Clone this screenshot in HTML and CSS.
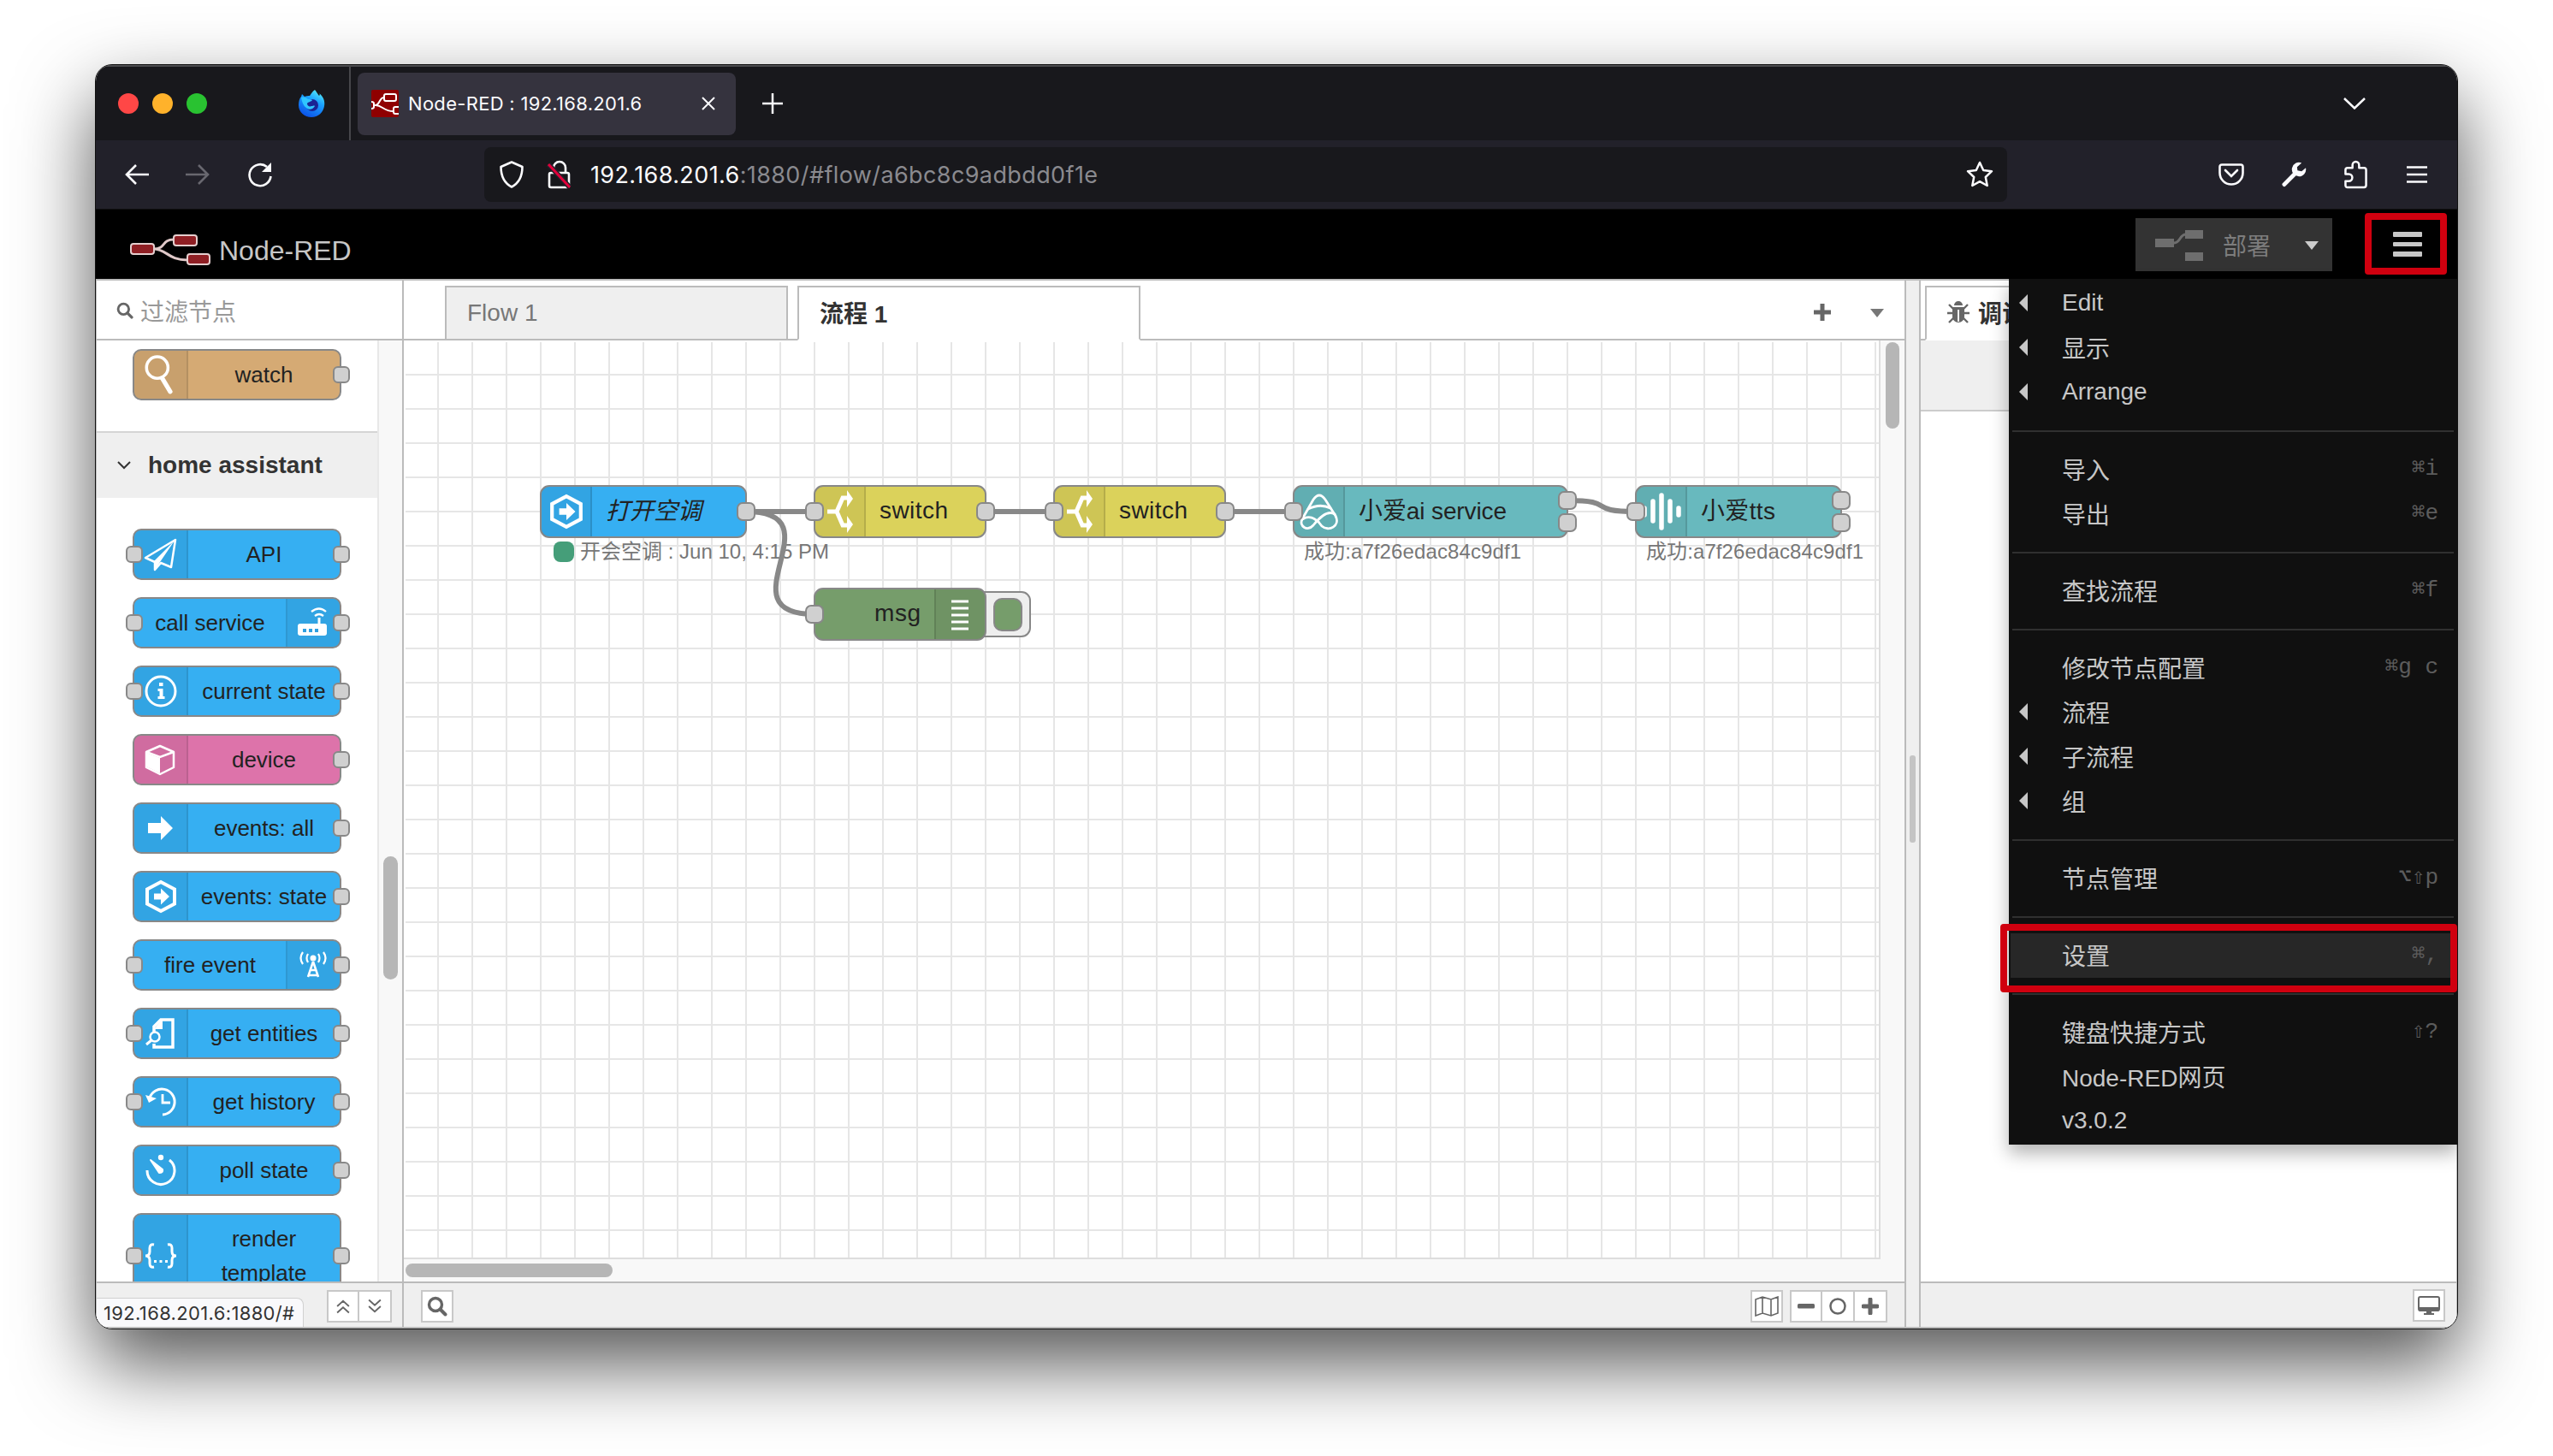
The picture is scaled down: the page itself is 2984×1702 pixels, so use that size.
FILE: index.html
```html
<!DOCTYPE html>
<html lang="zh-CN">
<head>
  <meta charset="UTF-8">
  <title>Node-RED : 192.168.201.6</title>
  <link rel="stylesheet" href="styles.css">
</head>
<body>
  <!-- Shared icons -->
  <svg class="sprite">
    <symbol id="i-hex" viewBox="0 0 40 40"><path d="M20 3 36 11.500V28.500L20 37 4 28.500V11.500Z" fill="none" stroke="#fff" stroke-width="4"/><path d="M12 16.500h8v-6l10 9.500-10 9.500v-6h-8z" fill="#fff"/></symbol>
    <symbol id="i-switch" viewBox="0 0 30 50"><path d="M0 25h11l7-16h6M11 25l7 16h6" fill="none" stroke="#fff" stroke-width="5"/><path d="M23 0l7 10-7 10zM23 30l7 10-7 10z" fill="#fff"/></symbol>
    <symbol id="i-search" viewBox="0 0 24 24"><circle cx="10" cy="10" r="7.500" fill="none" stroke="currentColor" stroke-width="3.400"/><path d="M15.500 15.500l6 6" stroke="currentColor" stroke-width="4" stroke-linecap="round"/></symbol>
    <symbol id="i-down" viewBox="0 0 16 10"><path d="M0 0h16L8 10z" fill="currentColor"/></symbol>
  </svg>

  <div class="window">
    <div class="titlebar">
      <div class="lights"><i class="red"></i><i class="yellow"></i><i class="green"></i></div>
      <svg class="firefox" viewBox="0 0 32 32">
        <defs>
          <linearGradient id="fx" x1=".8" y1="0" x2=".3" y2="1"><stop offset="0" stop-color="#5af0f5"/><stop offset=".4" stop-color="#1aa0ff"/><stop offset="1" stop-color="#0b50e8"/></linearGradient>
        </defs>
        <path d="M20 0c2 2 3 5 5 7 1-1 1-2 0-3 5 4 7 9 6 15-1 7-7 13-15 13S1 26 1 18c0-4 1-8 3-10l1-3c1 1 2 2 3 3 2-1 4-1 6-1 2-3 3-5 6-7z" fill="url(#fx)"/>
        <circle cx="17" cy="18" r="7" fill="#1b2493"/>
        <path d="M4 9c3-1 6 0 8 2 2 0 4 0 5 1-1 2-5 2-6 4 0 3 3 4 5 3 2 0 3-1 4 0-2 4-7 5-10 2-3-2-5-6-6-12z" fill="#30c6ff"/>
      </svg>
      <div class="tab-divider"></div>
      <div class="browser-tab">
        <svg class="favicon" viewBox="0 0 32 32"><rect width="32" height="32" rx="2" fill="#8f0000"/><g fill="none" stroke="#fff" stroke-width="2"><rect x="15" y="5" width="14" height="8" rx="2"/><path d="M3 18h2c5 0 4-9 10-9M5 18c8 0 9 7 21 7M32 20h-4q-2 0-2 2v4q0 2 2 2h4M0 14q3 0 3 2v4q0 2-3 2"/></g></svg>
        <span class="browser-tab-title">Node-RED : 192.168.201.6</span>
        <svg class="tab-close" viewBox="0 0 16 16"><path d="M1 1l14 14M15 1L1 15" stroke="#fbfbfe" stroke-width="2"/></svg>
      </div>
      <svg class="tab-new" viewBox="0 0 24 24"><path d="M12 0v24M0 12h24" stroke="#fbfbfe" stroke-width="2.500"/></svg>
      <svg class="tab-list" viewBox="0 0 26 14"><path d="M1 1l12 11.500L25 1" fill="none" stroke="#fbfbfe" stroke-width="2.500"/></svg>
    </div>

    <div class="toolbar">
      <svg class="nav-back" viewBox="0 0 28 24"><path d="M13 1L2 12l11 11M2 12h26" fill="none" stroke="#fbfbfe" stroke-width="2.600"/></svg>
      <svg class="nav-forward" viewBox="0 0 28 24"><path d="M15 1l11 11-11 11M26 12H0" fill="none" stroke="#68676f" stroke-width="2.600"/></svg>
      <svg class="nav-reload" viewBox="0 0 30 30"><path d="M23 6A12.500 12.500 0 1 0 27.500 17" fill="none" stroke="#fbfbfe" stroke-width="2.600"/><path d="M28 1v11H17z" fill="#fbfbfe"/></svg>
      <div class="urlbar">
        <svg class="shield" viewBox="0 0 28 32"><path d="M14 1.500L26.500 7c0 10-3 18.500-12.500 23.500C4.500 25.500 1.500 17 1.500 7z" fill="none" stroke="#fbfbfe" stroke-width="2.600" stroke-linejoin="round"/></svg>
        <svg class="lock" viewBox="0 0 30 34"><path d="M8 15V9a7 7 0 0 1 14 0v6M5 15h19q2 0 2 2v13q0 2-2 2H5q-2 0-2-2V17q0-2 2-2z" fill="none" stroke="#fbfbfe" stroke-width="2.600"/><path d="M2 5l25 27" stroke="#22212a" stroke-width="6"/><path d="M2 5l25 27" stroke="#e2003b" stroke-width="3"/></svg>
        <span class="url"><b>192.168.201.6</b>:1880/#flow/a6bc8c9adbdd0f1e</span>
        <svg class="star" viewBox="0 0 32 32"><path d="M16 2l4.200 9 9.800 1.200-7.200 6.800 1.900 10L16 24.200 7.300 29l1.900-10L2 12.200 11.800 11z" fill="none" stroke="#fbfbfe" stroke-width="2.500" stroke-linejoin="round"/></svg>
      </div>
      <div class="tools">
        <svg class="pocket" viewBox="0 0 30 26"><path d="M4 1.500h22q2.500 0 2.500 2.500v7a13.500 13.500 0 0 1-27 0V4Q1.500 1.500 4 1.500z" fill="none" stroke="#fbfbfe" stroke-width="2.600"/><path d="M8 8l7 7 7-7" fill="none" stroke="#fbfbfe" stroke-width="2.600" stroke-linecap="round"/></svg>
        <svg class="wrench" viewBox="0 0 30 30"><path d="M3 27L17 13" stroke="#fbfbfe" stroke-width="5" stroke-linecap="round"/><path d="M24 1a8.500 8.500 0 1 0 5 6l-5 4-5-1-.5-4z" fill="#fbfbfe"/></svg>
        <svg class="puzzle" viewBox="0 0 28 34"><path d="M10 9V5.500a4 4 0 0 1 8 0V9h6q2.500 0 2.500 2.500V30q0 2.500-2.500 2.500H4q-2.500 0-2.500-2.500v-5h4a4 4 0 0 0 0-8.500h-4v-5Q1.500 9 4 9z" fill="none" stroke="#fbfbfe" stroke-width="2.600" stroke-linejoin="round"/></svg>
        <svg class="burger" viewBox="0 0 24 20"><path d="M0 1.500h24M0 10h24M0 18.500h24" stroke="#fbfbfe" stroke-width="2.400"/></svg>
      </div>
    </div>

    <div class="header">
      <svg class="logo" viewBox="0 0 94 37"><path d="M27 17c16 0 9-11 24-11M27 17c16 0 17 13 40 13" fill="none" stroke="#e0c9c9" stroke-width="3"/><g fill="#8f1f24" stroke="#e5cfcf" stroke-width="2"><rect x="1" y="11" width="27" height="12" rx="3"/><rect x="51" y="1" width="27" height="12" rx="3"/><rect x="67" y="23" width="26" height="12" rx="3"/></g></svg>
      <span class="brand">Node-RED</span>
      <div class="deploy">
        <svg class="deploy-icon" viewBox="0 0 56 38"><path d="M22 15c8 0 6-10 14-10" fill="none" stroke="#6e6e6e" stroke-width="3"/><path d="M0 10h22v10H0zM35 0h21v10H35zM35 26h21v10H35z" fill="#6e6e6e"/></svg>
        <span>部署</span>
        <svg class="caret"><use href="#i-down"/></svg>
      </div>
      <div class="menu-button"><i></i><i></i><i></i></div>
    </div>

    <div class="editor">
      <div class="palette">
        <div class="palette-search"><svg><use href="#i-search"/></svg>过滤节点</div>
        <div class="palette-body">
          <div class="palette-scroll">
            <div class="category first">
              <div class="pnode watch"><div class="icon"><svg viewBox="0 0 40 44"><circle cx="16" cy="14" r="12" fill="none" stroke="#fff" stroke-width="3.400"/><path d="M21.500 26l9 15" stroke="#fff" stroke-width="5" stroke-linecap="round"/></svg></div><span>watch</span><i class="port out"></i></div>
            </div>
            <div class="category-title"><svg viewBox="0 0 16 10"><path d="M1 1l7 7 7-7" fill="none" stroke="#333" stroke-width="2"/></svg>home assistant</div>
            <div class="category">
              <div class="pnode"><i class="port in"></i><div class="icon"><svg viewBox="0 0 40 40"><path d="M2 24L37 3l-5 32-12-5-7 8v-9z" fill="none" stroke="#fff" stroke-width="2.500" stroke-linejoin="round"/><path d="M12 28L36 4 19 29l-6 9z" fill="#fff"/></svg></div><span>API</span><i class="port out"></i></div>
              <div class="pnode right"><i class="port in"></i><span>call service</span><div class="icon"><svg viewBox="0 0 40 40"><path d="M26 14v9" stroke="#fff" stroke-width="3"/><path d="M22 13q5-4 10 0M18 8q9-7 17 0" transform="translate(-1 -1)" fill="none" stroke="#fff" stroke-width="2.300"/><path d="M6 21h26q3 0 3 3v8q0 3-3 3H4q-3 0-3-3v-8q0-3 3-3z" fill="#fff"/><path d="M7 27h4v4H7zM14 27h4v4h-4zM21 27h4v4h-4z" fill="#2f9fe0"/></svg></div><i class="port out"></i></div>
              <div class="pnode"><i class="port in"></i><div class="icon"><svg viewBox="0 0 40 40"><circle cx="20" cy="20" r="17" fill="none" stroke="#fff" stroke-width="3"/><path d="M18 10h4.500v4H18zM16.500 17h6v9h2v3h-8v-3h2v-6h-2z" fill="#fff"/></svg></div><span>current state</span><i class="port out"></i></div>
              <div class="pnode device"><div class="icon"><svg viewBox="0 0 40 40"><path d="M19 4l16 7v18l-16 8-16-8V11z" fill="none" stroke="#fff" stroke-width="2.500" stroke-linejoin="round"/><path d="M3 11l16 6 16-6" fill="none" stroke="#fff" stroke-width="2.500"/><path d="M3 12l16 6v18L3 28z" fill="#fff"/></svg></div><span>device</span><i class="port out"></i></div>
              <div class="pnode"><div class="icon"><svg viewBox="0 0 40 40"><path d="M5 14h15V6l14 14-14 14v-8H5z" fill="#fff"/></svg></div><span>events: all</span><i class="port out"></i></div>
              <div class="pnode"><div class="icon"><svg><use href="#i-hex"/></svg></div><span>events: state</span><i class="port out"></i></div>
              <div class="pnode right"><i class="port in"></i><span>fire event</span><div class="icon"><svg viewBox="0 0 40 40"><circle cx="19" cy="12" r="3.500" fill="#fff"/><path d="M19 16l-6 18M19 16l6 18M15.500 26h7M13 32h12" fill="none" stroke="#fff" stroke-width="2.500"/><path d="M13 7q-3 5 0 10M25 7q3 5 0 10M7 5q-5 7 0 14M31 5q5 7 0 14" fill="none" stroke="#fff" stroke-width="2.200"/></svg></div><i class="port out"></i></div>
              <div class="pnode"><i class="port in"></i><div class="icon"><svg viewBox="0 0 40 40"><path d="M12 19V12L20 4h14v32H12v-4" fill="none" stroke="#fff" stroke-width="3.500"/><path d="M12 15L22 3v12z" fill="#fff"/><circle cx="13" cy="24" r="5.500" fill="none" stroke="#fff" stroke-width="2.500"/><path d="M9 28l-6 5" stroke="#fff" stroke-width="3"/></svg></div><span>get entities</span><i class="port out"></i></div>
              <div class="pnode"><i class="port in"></i><div class="icon"><svg viewBox="0 0 40 40"><path d="M7 15a15 15 0 1 1 15 20" fill="none" stroke="#fff" stroke-width="3"/><path d="M2 12l4 9 9-5z" fill="#fff"/><path d="M22 11v10h9" fill="none" stroke="#fff" stroke-width="2.800"/></svg></div><span>get history</span><i class="port out"></i></div>
              <div class="pnode"><div class="icon"><svg viewBox="0 0 40 40"><path d="M4 20a16 16 0 1 0 26-12" fill="none" stroke="#fff" stroke-width="3"/><path d="M8 8l14 11q1 4-4 4z" fill="#fff" stroke="#fff" stroke-width="2" stroke-linejoin="round"/><circle cx="20" cy="5" r="3.200" fill="#fff"/></svg></div><span>poll state</span><i class="port out"></i></div>
              <div class="pnode tall"><i class="port in"></i><div class="icon"><svg viewBox="0 0 40 40"><path d="M12 7q-5-1-5 4v4q0 5-5 5 5 0 5 5v4q0 5 5 4M28 7q5-1 5 4v4q0 5 5 5-5 0-5 5v4q0 5-5 4" fill="none" stroke="#fff" stroke-width="3"/><path d="M12 25h3v3h-3zM18.500 25h3v3h-3zM25 25h3v3h-3z" fill="#fff"/></svg></div><span>render<br>template</span><i class="port out"></i></div>
            </div>
          </div>
          <div class="palette-track"><i></i></div>
        </div>
        <div class="footer palette-footer">
          <div class="status-url">192.168.201.6:1880/#</div>
          <div class="button-group">
            <div class="fbutton"><svg viewBox="0 0 16 16"><path d="M2.500 8L8 3l5.500 5M2.500 14L8 9l5.500 5" fill="none" stroke="#666" stroke-width="1.500"/></svg></div>
            <div class="fbutton"><svg viewBox="0 0 16 16"><path d="M2.500 2L8 7l5.500-5M2.500 8L8 13l5.500-5" fill="none" stroke="#666" stroke-width="1.500"/></svg></div>
          </div>
        </div>
      </div>

      <div class="workspace">
        <div class="tabs">
          <div class="tab">Flow 1</div>
          <div class="tab active">流程 1</div>
          <svg class="tab-add" viewBox="0 0 22 22"><path d="M11 1v20M1 11h20" stroke="#666" stroke-width="5"/></svg>
          <svg class="tab-menu"><use href="#i-down"/></svg>
        </div>
        <div class="chart">
          <!-- Canvas origin is the top left corner of the grid -->
          <svg class="canvas" viewBox="472 398 1726 1074">
            <defs>
              <pattern id="grid" x="512" y="438" width="40" height="40" patternUnits="userSpaceOnUse"><path d="M0 0h40M0 0v40M40 0v40M0 40h40" stroke="#e6e6e6" stroke-width="2"/></pattern>
            </defs>
            <rect x="474" y="400" width="1723" height="1070" fill="url(#grid)"/>
            <path d="M2197 398v1073H472" fill="none" stroke="#ddd" stroke-width="2"/>

            <g class="status">
              <rect x="647" y="633" width="24" height="24" rx="8" fill="#459e79"/>
              <text x="678" y="653" textLength="291">开会空调 : Jun 10, 4:15 PM</text>
              <text x="1524" y="653" textLength="254">成功:a7f26edac84c9df1</text>
              <text x="1924" y="653" textLength="254">成功:a7f26edac84c9df1</text>
            </g>

            <g class="links">
              <path d="M872 598H952M1152 598h80M1432 598h80"/>
              <path d="M872 598C982 598 842 718 952 718"/>
              <path d="M1832 585C1892 585 1852 598 1912 598"/>
            </g>

            <g class="node">
              <rect class="box" x="632" y="568" width="240" height="60" rx="10" fill="#36aff2"/>
              <path class="shade" d="M692 569v58H642q-9 0-9-9V578q0-9 9-9z"/><path class="edge" d="M691 569v58"/>
              <use href="#i-hex" x="641" y="577" width="42" height="42"/>
              <text class="italic" x="708" y="607">打开空调</text>
              <rect class="port" x="862" y="588" width="20" height="20" rx="6"/>
            </g>
            <g class="node">
              <rect class="box" x="952" y="568" width="200" height="60" rx="10" fill="#dbd25b"/>
              <path class="shade" d="M1012 569v58H962q-9 0-9-9V578q0-9 9-9z"/><path class="edge" d="M1011 569v58"/>
              <use href="#i-switch" x="967" y="573" width="30" height="50"/>
              <text x="1028" y="606" textLength="80">switch</text>
              <rect class="port" x="942" y="588" width="20" height="20" rx="6"/>
              <rect class="port" x="1142" y="588" width="20" height="20" rx="6"/>
            </g>
            <g class="node">
              <rect class="box" x="1232" y="568" width="200" height="60" rx="10" fill="#dbd25b"/>
              <path class="shade" d="M1292 569v58h-50q-9 0-9-9V578q0-9 9-9z"/><path class="edge" d="M1291 569v58"/>
              <use href="#i-switch" x="1247" y="573" width="30" height="50"/>
              <text x="1308" y="606" textLength="80">switch</text>
              <rect class="port" x="1222" y="588" width="20" height="20" rx="6"/>
              <rect class="port" x="1422" y="588" width="20" height="20" rx="6"/>
            </g>
            <g class="node">
              <rect class="box" x="1512" y="568" width="320" height="60" rx="10" fill="#68b9be"/>
              <path class="shade" d="M1572 569v58h-50q-9 0-9-9V578q0-9 9-9z"/><path class="edge" d="M1571 569v58"/>
              <g fill="none" stroke="#fff" stroke-width="2.800" stroke-linecap="round"><path d="M1522 607L1535 584Q1542 574 1549 584L1561 603C1567 615 1553 622 1545 615L1541 610"/><path d="M1529 595Q1543 588 1555 594"/><path d="M1522 607C1518 615 1528 622 1535 614C1543 604 1552 596 1560 601"/><path d="M1522 607C1531 602 1536 606 1541 610"/></g>
              <text x="1588" y="607" textLength="173">小爱ai service</text>
              <rect class="port" x="1502" y="588" width="20" height="20" rx="6"/>
              <rect class="port" x="1822" y="575" width="20" height="20" rx="6"/>
              <rect class="port" x="1822" y="601" width="20" height="20" rx="6"/>
            </g>
            <g class="node">
              <rect class="box" x="1912" y="568" width="240" height="60" rx="10" fill="#68b9be"/>
              <path class="shade" d="M1972 569v58h-50q-9 0-9-9V578q0-9 9-9z"/><path class="edge" d="M1971 569v58"/>
              <path d="M1922 594v8M1932 586v23M1942 579v38M1952 586v23M1962 594v8" stroke="#fff" stroke-width="5.500" stroke-linecap="round"/>
              <text x="1988" y="607" textLength="87">小爱tts</text>
              <rect class="port" x="1902" y="588" width="20" height="20" rx="6"/>
              <rect class="port" x="2142" y="575" width="20" height="20" rx="6"/>
              <rect class="port" x="2142" y="601" width="20" height="20" rx="6"/>
            </g>
            <g class="node">
              <rect x="1130" y="692" width="74" height="52" rx="10" fill="#eee" stroke="#888" stroke-width="2"/>
              <rect x="1162" y="700" width="32" height="37" rx="9" fill="#769d6b" stroke="#888" stroke-width="2"/>
              <rect class="box" x="952" y="688" width="200" height="60" rx="10" fill="#769d6b"/>
              <path class="shade" d="M1092 689v58h50q9 0 9-9V698q0-9-9-9z"/><path class="edge" d="M1093 689v58"/>
              <path d="M1112 703h20M1112 711h20M1112 719h20M1112 727h20M1112 735h20" stroke="#fff" stroke-width="3"/>
              <text x="1022" y="726" textLength="54">msg</text>
              <rect class="port" x="942" y="708" width="20" height="20" rx="6"/>
            </g>
          </svg>
          <div class="v-track"><i></i></div>
          <div class="h-track"><i></i></div>
        </div>
        <div class="footer workspace-footer">
          <div class="fbutton"><svg class="big"><use href="#i-search"/></svg></div>
          <div class="fbutton map"><svg class="map-icon" viewBox="0 0 28 24"><path d="M1 4l8-3 10 3 8-3v19l-8 3-10-3-8 3zM9 1v19M19 4v19" fill="none" stroke="#666" stroke-width="1.600"/></svg></div>
          <div class="button-group">
            <div class="fbutton"><svg viewBox="0 0 20 20"><rect y="7" width="20" height="5.500" rx="1.500" fill="#666"/></svg></div>
            <div class="fbutton"><svg viewBox="0 0 20 20"><circle cx="10" cy="10" r="8.500" fill="none" stroke="#666" stroke-width="2.500"/></svg></div>
            <div class="fbutton"><svg viewBox="0 0 20 20"><path d="M10 2v16M2 10h16" stroke="#666" stroke-width="5" stroke-linecap="round"/></svg></div>
          </div>
        </div>
      </div>

      <div class="separator"><i></i></div>

      <div class="sidebar">
        <div class="tabs sidebar-tabs">
          <div class="tab active"><svg viewBox="0 0 26 26"><path d="M8 5a5 5 0 0 1 10 0zM6 7h14v11a7 7 0 0 1-14 0z" fill="#666"/><path d="M0 14h26M2 4l5 5M24 4l-5 5M2 25l6-6M24 25l-6-6" stroke="#666" stroke-width="2.400"/><path d="M13 10v14" stroke="#fff" stroke-width="1.800"/></svg>调试</div>
        </div>
        <div class="sidebar-toolbar"></div>
        <div class="sidebar-content"></div>
        <div class="footer sidebar-footer"><div class="fbutton"><svg class="monitor" viewBox="0 0 26 22"><rect x="1" y="1" width="24" height="16" rx="2" fill="#fff" stroke="#666" stroke-width="2"/><path d="M1 13h24v3q0 2-2 2H3q-2 0-2-2zM10 18h6v2h3v2H7v-2h3z" fill="#666"/></svg></div></div>
      </div>
    </div>

    <div class="menu">
      <div class="item sub">Edit</div>
      <div class="item sub">显示</div>
      <div class="item sub">Arrange</div>
      <hr>
      <div class="item">导入<kbd><i>⌘</i><i>i</i></kbd></div>
      <div class="item">导出<kbd><i>⌘</i><i>e</i></kbd></div>
      <hr>
      <div class="item">查找流程<kbd><i>⌘</i><i>f</i></kbd></div>
      <hr>
      <div class="item">修改节点配置<kbd><i>⌘</i><i>g</i><i></i><i>c</i></kbd></div>
      <div class="item sub">流程</div>
      <div class="item sub">子流程</div>
      <div class="item sub">组</div>
      <hr>
      <div class="item">节点管理<kbd><i>⌥</i><i>⇧</i><i>p</i></kbd></div>
      <hr>
      <div class="item hover">设置<kbd><i>⌘</i><i>,</i></kbd></div>
      <hr>
      <div class="item">键盘快捷方式<kbd><i>⇧</i><i>?</i></kbd></div>
      <div class="item">Node-RED网页</div>
      <div class="item">v3.0.2</div>
    </div>
  </div>

  <div class="mark mark-menu"></div>
  <div class="mark mark-settings"></div>
</body>
</html>
```
FILE: styles.css
```css
* {
  box-sizing: border-box;
}
body {
  margin: 0;
  padding: 75px 0 0 111px;
  width: 2984px;
  height: 1702px;
  overflow: hidden;
  background: #fff;
  font-family: "Liberation Sans", "Noto Sans CJK SC", sans-serif;
  font-size: 28px;
  color: #333;
}
svg {
  display: block;
  flex: none;
}
.sprite {
  position: absolute;
  width: 0;
  height: 0;
}
.window {
  position: relative;
  display: flex;
  flex-direction: column;
  width: 2762px;
  height: 1479px;
  border: 1px solid #111;
  border-radius: 20px;
  background: #fff;
  box-shadow: 0 40px 90px rgba(0, 0, 0, .67);
  overflow: hidden;
}

/* Browser chrome */
.titlebar {
  display: flex;
  align-items: center;
  height: 88px;
  padding-left: 26px;
  background: #18181c;
  border-top: 2px solid #4b4b4e;
  font-family: Inter, sans-serif;
}
.lights {
  display: flex;
  gap: 16px;
}
.lights i {
  width: 24px;
  height: 24px;
  border-radius: 50%;
}
.lights .red { background: #ff4746; }
.lights .yellow { background: #ffb22b; }
.lights .green { background: #29c231; }
.firefox {
  width: 32px;
  height: 32px;
  margin-left: 106px;
}
.tab-divider {
  width: 2px;
  height: 88px;
  margin-left: 28px;
  background: #47474b;
}
.browser-tab {
  display: flex;
  align-items: center;
  width: 442px;
  height: 73px;
  margin-left: 8px;
  padding: 0 24px 0 16px;
  border-radius: 8px;
  background: #35333e;
  color: #fbfbfe;
}
.favicon {
  width: 32px;
  height: 32px;
}
.browser-tab-title {
  flex: 1;
  margin-left: 11px;
  font-size: 22px;
  letter-spacing: .3px;
  white-space: nowrap;
}
.tab-close { width: 16px; height: 16px; }
.tab-new { width: 24px; height: 24px; margin-left: 31px; }
.tab-list { width: 26px; height: 14px; margin: 0 107px 0 auto; }
.toolbar {
  display: flex;
  align-items: center;
  height: 81px;
  padding: 0 35px 0 34px;
  background: #22212a;
  border-bottom: 1px solid #111;
}
.nav-back, .nav-forward { width: 28px; height: 24px; }
.nav-forward { margin-left: 43px; }
.nav-reload { width: 30px; height: 30px; margin-left: 44px; }
.urlbar {
  display: flex;
  align-items: center;
  width: 1780px;
  height: 64px;
  margin-left: 247px;
  padding: 0 16px 0 18px;
  border-radius: 8px;
  background: #18181c;
}
.shield { width: 28px; height: 32px; }
.lock { width: 30px; height: 34px; margin-left: 27px; }
.url {
  flex: 1;
  margin-left: 21px;
  font-family: Inter, sans-serif;
  font-size: 27px;
  letter-spacing: .39px;
  color: #8a8a8f;
}
.url b {
  font-weight: 400;
  color: #fbfbfe;
}
.star { width: 32px; height: 32px; }
.tools {
  display: flex;
  flex: 1;
  align-items: center;
  justify-content: flex-end;
  gap: 44px;
}
.pocket { width: 30px; height: 26px; }
.wrench { width: 29px; height: 30px; }
.puzzle { width: 27px; height: 34px; }
.burger { width: 24px; height: 20px; margin-left: 2px; }

/* Editor header */
.header {
  display: flex;
  align-items: center;
  height: 81px;
  padding: 0 41px 0 40px;
  background: #000;
}
.logo {
  width: 94px;
  height: 37px;
  margin-top: 14px;
}
.brand {
  flex: 1;
  margin: 15px 0 0 10px;
  font-size: 32px;
  color: #c7c7c7;
}
.deploy {
  display: flex;
  align-items: center;
  width: 230px;
  height: 62px;
  padding: 0 16px 0 23px;
  background: #333;
  color: #7d7d7d;
}
.deploy-icon { width: 56px; height: 38px; margin: 4px 23px 0 0; }
.deploy .caret { width: 16px; height: 10px; margin: 2px 0 0 auto; color: #ccc; }
.menu-button {
  display: flex;
  flex-direction: column;
  gap: 6px;
  margin-left: 71px;
}
.menu-button i {
  width: 34px;
  height: 5.500px;
  border-radius: 1px;
  background: #c7c7c7;
}

/* Editor layout */
.editor {
  display: flex;
  flex: 1;
  min-height: 0;
  border: solid #bbb;
  border-width: 2px 1px;
}
.palette {
  display: flex;
  flex-direction: column;
  width: 359px;
  border-right: 2px solid #bbb;
}
.palette-search {
  display: flex;
  align-items: center;
  height: 70px;
  padding: 1px 0 0 23px;
  border-bottom: 2px solid #bbb;
  color: #999;
}
.palette-search svg {
  width: 20px;
  height: 20px;
  margin-right: 8px;
  color: #666;
}
.palette-body {
  display: flex;
  flex: 1;
  min-height: 0;
}
.palette-scroll {
  width: 328px;
  overflow: hidden;
}
.palette-track {
  flex: 1;
  padding: 603px 0 0 5px;
  background: #f8f8f8;
  border-left: 2px solid #e8e8e8;
}
.palette-track i {
  display: block;
  width: 17px;
  height: 144px;
  border-radius: 9px;
  background: #b6b6b6;
}
.category {
  display: flex;
  flex-direction: column;
  gap: 20px;
  padding: 36px 0 36px 42px;
}
.category.first {
  padding-top: 10px;
}
.category-title {
  display: flex;
  align-items: center;
  height: 78px;
  padding-left: 24px;
  background: #efefef;
  border-top: 2px solid #d5d5d5;
  font-weight: bold;
}
.category-title svg {
  width: 16px;
  height: 10px;
  margin-right: 20px;
}
.pnode {
  position: relative;
  display: flex;
  flex: none;
  width: 244px;
  height: 60px;
  border: 2px solid #888;
  border-radius: 10px;
  background: #36aff2;
  color: #222;
  font-size: 26px;
  line-height: 40px;
}
.pnode.watch { background: #d5aa74; }
.pnode.device { background: #dd73aa; }
.pnode.tall { height: 100px; }
.pnode span {
  flex: 1;
  align-self: center;
  text-align: center;
  white-space: nowrap;
}
.pnode .icon {
  display: flex;
  align-items: center;
  justify-content: center;
  width: 63px;
  border-right: 2px solid rgba(0, 0, 0, .1);
  border-radius: 8px 0 0 8px;
  background: rgba(0, 0, 0, .06);
}
.pnode.right .icon {
  border-left: 2px solid rgba(0, 0, 0, .08);
  border-right: 0;
  border-radius: 0 8px 8px 0;
}
.pnode .icon svg {
  width: 40px;
  height: 40px;
}
.pnode.watch .icon svg {
  width: 44px;
  height: 46px;
}
.pnode .port {
  position: absolute;
  top: 50%;
  z-index: 1;
  width: 20px;
  height: 20px;
  margin-top: -10px;
  border: 2px solid #888;
  border-radius: 6px;
  background: #d0d0d0;
}
.port.in { left: -10px; }
.port.out { right: -12px; }

/* Workspace */
.workspace {
  display: flex;
  flex-direction: column;
  width: 1756px;
  border-right: 2px solid #bbb;
}
.tabs {
  display: flex;
  align-items: flex-end;
  height: 70px;
  padding-left: 48px;
  background: linear-gradient(#bbb, #bbb) bottom / 100% 2px no-repeat;
}
.tab {
  display: flex;
  align-items: center;
  width: 401px;
  height: 64px;
  margin-right: 11px;
  padding-left: 24px;
  border: 2px solid #bbb;
  background: #efefef;
  color: #777;
}
.tab.active {
  padding-bottom: 2px;
  border-bottom-color: #fff;
  background: #fff;
  color: #333;
  font-weight: bold;
}
.tab-add { width: 22px; height: 22px; margin: 0 45px 22px auto; }
.tab-menu { width: 16px; height: 10px; margin: 0 24px 27px 0; color: #777; }
.chart {
  display: grid;
  flex: 1;
  grid-template-columns: 1726px 1fr;
  grid-template-rows: 1074px 1fr;
  min-height: 0;
  background: #f8f8f8;
}
.canvas {
  width: 1726px;
  height: 1074px;
  background: #fff;
  font-size: 28px;
}
.canvas text { fill: #222; }
.canvas .status text {
  fill: #777;
  font-size: 24px;
}
.canvas .italic { font-style: italic; }
.links path {
  fill: none;
  stroke: #888;
  stroke-width: 6;
}
.node .box { stroke: #888; stroke-width: 2; }
.node .port { fill: #d0d0d0; stroke: #888; stroke-width: 2; }
.node .shade { fill: #000; fill-opacity: .06; }
.node .edge { stroke: #000; stroke-opacity: .12; stroke-width: 2; }
.v-track { padding: 2px 0 0 6px; }
.v-track i {
  display: block;
  width: 16px;
  height: 101px;
  border-radius: 8px;
  background: #b6b6b6;
}
.h-track {
  grid-column: 1 / 3;
  padding: 5px 0 0 2px;
}
.h-track i {
  display: block;
  width: 242px;
  height: 16px;
  border-radius: 8px;
  background: #b6b6b6;
}
.separator {
  display: flex;
  align-items: center;
  justify-content: center;
  width: 15px;
  background: #efefef;
}
.separator i {
  width: 7px;
  height: 102px;
  margin-bottom: 11px;
  border-radius: 3px;
  background: #c4c4c4;
}

/* Footers */
.footer {
  display: flex;
  align-items: center;
  height: 53px;
  padding-top: 2px;
  border-top: 2px solid #bbb;
  background: #efefef;
}
.fbutton {
  display: flex;
  align-items: center;
  justify-content: center;
  width: 38px;
  height: 38px;
  border: 2px solid #c8c8c8;
  background: #fff;
  color: #666;
}
.fbutton svg { width: 20px; height: 20px; }
.fbutton .big { width: 24px; height: 24px; }
.fbutton .map-icon { width: 28px; height: 24px; }
.fbutton .monitor { width: 26px; height: 22px; }
.button-group { display: flex; }
.button-group .fbutton + .fbutton { border-left: 0; }
.palette-footer {
  justify-content: space-between;
  padding-right: 12px;
}
.status-url {
  align-self: flex-end;
  width: 242px;
  height: 34px;
  padding-left: 8px;
  border: solid #d0d0d0;
  border-width: 1px 1px 0 0;
  border-radius: 0 8px 0 0;
  background: #f9f9fb;
  font: 22px/34px Inter, sans-serif;
  letter-spacing: .35px;
  white-space: nowrap;
}
.workspace-footer { padding: 2px 20px 0; }
.workspace-footer .map { margin: 0 8px 0 auto; }
.sidebar-footer {
  justify-content: flex-end;
  padding: 0 13px 0 0;
}

/* Sidebar */
.sidebar {
  display: flex;
  flex: 1;
  flex-direction: column;
  min-width: 0;
  border-left: 2px solid #bbb;
}
.sidebar-tabs { padding-left: 5px; }
.sidebar-tabs svg { width: 26px; height: 26px; margin-right: 10px; }
.sidebar-toolbar {
  height: 83px;
  border-bottom: 2px solid #ccc;
  background: #efefef;
}
.sidebar-content { flex: 1; }

/* Main menu */
.menu {
  position: absolute;
  top: 250px;
  left: 2236px;
  width: 524px;
  height: 1012px;
  padding-top: 3px;
  background: #101010;
  box-shadow: 0 10px 20px rgba(0, 0, 0, .3);
  color: #c7c7c7;
}
.item {
  display: flex;
  align-items: center;
  justify-content: space-between;
  height: 52px;
  padding: 0 22px 2px 62px;
}
.item.sub {
  justify-content: flex-start;
  padding-left: 12px;
}
.item.sub::before {
  content: "";
  margin-right: 40px;
  border: solid transparent;
  border-width: 10px 10px 10px 0;
  border-right-color: #c7c7c7;
}
.item.hover {
  margin-left: 2px;
  padding-left: 60px;
  background: #272727;
}
.menu hr {
  height: 2px;
  margin: 18px 4px;
  border: 0;
  background: #303030;
}
.menu kbd {
  display: flex;
  font: 26px/40px "Liberation Mono", "DejaVu Sans Mono", monospace;
  color: #5c5c5c;
}
.menu kbd i {
  display: flex;
  justify-content: center;
  width: 15.600px;
  font-style: normal;
}

/* Red callouts over the page */
.mark {
  position: absolute;
  border: 8px solid #d0000f;
  border-radius: 4px;
}
.mark-menu {
  top: 249px;
  left: 2764px;
  width: 96px;
  height: 72px;
}
.mark-settings {
  top: 1080px;
  left: 2338px;
  width: 534px;
  height: 80px;
}
```
